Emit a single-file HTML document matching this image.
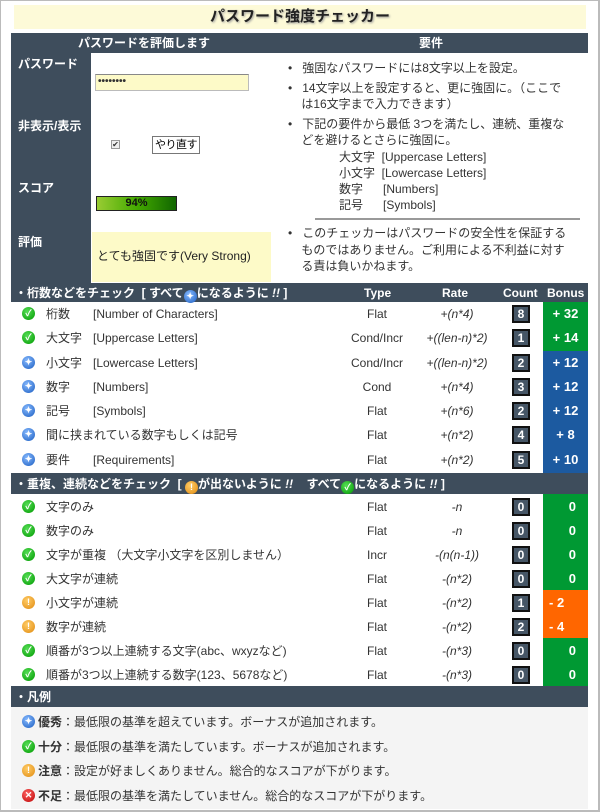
<!DOCTYPE html>
<html><head><meta charset="utf-8"><style>
*{box-sizing:border-box;margin:0;padding:0}
body{width:600px;height:812px;background:#fff;font-family:"Liberation Sans","Noto Sans CJK JP",sans-serif;font-size:12px;color:#333;position:relative;overflow:hidden}
.frame{position:absolute;left:0;top:0;width:600px;height:812px;border:1px solid #bbb;border-right:2px solid #bbb;border-bottom:2px solid #bbb}
.a{position:absolute;white-space:nowrap;line-height:16px}
.dark{background:#3e4d5c;color:#fff;font-weight:bold}
.ic{position:absolute;width:13px;height:13px;border-radius:50%;color:#fff;font-size:9px;line-height:13px;text-align:center;font-weight:bold}
.g{background:radial-gradient(circle at 40% 35%,#5d5,#090)}
.b{background:radial-gradient(circle at 40% 35%,#8bf,#1a5cc0)}
.o{background:radial-gradient(circle at 40% 35%,#fc6,#e08a10)}
.r{background:radial-gradient(circle at 40% 35%,#f66,#b00)}
.cnt{position:absolute;left:512px;width:18px;height:18px;background:#465666;border:2px solid #111;color:#fff;font-size:12px;font-weight:bold;text-align:center;line-height:14px}
.bon{position:absolute;left:543px;width:45px;color:#fff;font-weight:bold;font-size:13px;text-align:center;line-height:16px}
.ty{position:absolute;left:340px;width:74px;text-align:center;line-height:16px}
.rt{position:absolute;left:415px;width:84px;text-align:center;font-style:italic;line-height:16px}
.br{position:absolute;left:93px}
</style></head><body>
<div class="frame"></div>
<div class="a" style="left:14px;top:5px;width:572px;height:24px;background:#fdfad8;text-align:center;font-size:15px;font-weight:bold;line-height:24px;color:#222;text-shadow:1px 1px 2px #999">パスワード強度チェッカー</div>
<div class="a dark" style="left:11px;top:33px;width:577px;height:20px"></div>
<div class="a" style="left:78px;top:35px;color:#fff;font-weight:bold">パスワードを評価します</div>
<div class="a" style="left:419px;top:35px;color:#fff;font-weight:bold">要件</div>
<div class="a dark" style="left:11px;top:53px;width:80px;height:230px"></div>
<div class="a" style="left:18px;top:56px;color:#fff;font-weight:bold">パスワード</div>
<div class="a" style="left:18px;top:118px;color:#fff;font-weight:bold">非表示/表示</div>
<div class="a" style="left:18px;top:180px;color:#fff;font-weight:bold">スコア</div>
<div class="a" style="left:18px;top:234px;color:#fff;font-weight:bold">評価</div>
<div class="a" style="left:95px;top:74px;width:154px;height:17px;background:#fdfac8;border:1px solid #bbb;border-top-color:#888;font-size:10px;line-height:14px;padding-left:2px;font-weight:bold">••••••••</div>
<div class="a" style="left:111px;top:140px;width:9px;height:9px;border:1px solid #999;background:#eee;font-size:8px;line-height:7px;text-align:center">✔</div>
<div class="a" style="left:152px;top:136px;width:48px;height:18px;border:1px solid #777;background:#fff;font-size:11px;text-align:center;line-height:16px;color:#000;letter-spacing:-0.5px">やり直す</div>
<div class="a" style="left:96px;top:196px;width:81px;height:15px;background:linear-gradient(90deg,#9c3 0%,#4a0 50%,#160 100%);border:1px solid #222;text-align:center;font-size:11px;font-weight:bold;line-height:13px;color:#111">94%</div>
<div class="a" style="left:92px;top:232px;width:179px;height:50px;background:#fdfac8;padding:16px 0 0 5px;font-size:12px;color:#222">とても強固です(Very Strong)</div>
<div class="a" style="left:288px;top:60px;line-height:16.5px;font-size:12px;color:#333;white-space:normal;width:295px">
<div>•&nbsp;&nbsp; 強固なパスワードには8文字以上を設定。</div>
<div style="margin-top:3px">•&nbsp;&nbsp; 14文字以上を設定すると、更に強固に。（ここで<br>&nbsp;&nbsp;&nbsp;&nbsp;は16文字まで入力できます）</div>
<div style="margin-top:3px">•&nbsp;&nbsp; 下記の要件から最低 3つを満たし、連続、重複な<br>&nbsp;&nbsp;&nbsp;&nbsp;どを避けるとさらに強固に。</div>
<div style="padding-left:51px;line-height:16px">大文字&nbsp; [Uppercase Letters]<br>小文字&nbsp; [Lowercase Letters]<br>数字&nbsp;&nbsp;&nbsp;&nbsp;&nbsp; [Numbers]<br>記号&nbsp;&nbsp;&nbsp;&nbsp;&nbsp; [Symbols]</div>
</div>
<div class="a" style="left:315px;top:218px;width:265px;height:2px;background:#999"></div>
<div class="a" style="left:288px;top:225px;line-height:16.5px;white-space:normal;width:300px">•&nbsp;&nbsp; このチェッカーはパスワードの安全性を保証する<br>&nbsp;&nbsp;&nbsp;&nbsp;ものではありません。ご利用による不利益に対す<br>&nbsp;&nbsp;&nbsp;&nbsp;る責は負いかねます。</div>

<!-- section 1 -->
<div class="a dark" style="left:11px;top:283px;width:577px;height:19px"></div>
<div class="a" style="left:15px;top:285px;color:#fff;font-weight:bold">・桁数などをチェック &nbsp;[ すべて<span class="ic b" style="position:relative;display:inline-block;top:2px">✦</span>になるように <i>!!</i> ]</div>
<div class="a" style="left:364px;top:285px;color:#fff;font-weight:bold">Type</div>
<div class="a" style="left:442px;top:285px;color:#fff;font-weight:bold">Rate</div>
<div class="a" style="left:503px;top:285px;color:#fff;font-weight:bold">Count</div>
<div class="a" style="left:547px;top:285px;color:#fff;font-weight:bold">Bonus</div>
<div class="a" style="left:543px;top:302px;width:45px;height:49px;background:#093"></div>
<div class="a" style="left:543px;top:351px;width:45px;height:122px;background:#1c5aa0"></div>

<div class="ic g" style="left:22px;top:307px">✓</div><div class="a" style="left:46px;top:306px">桁数</div><div class="a br" style="top:306px">[Number of Characters]</div><div class="ty" style="top:306px">Flat</div><div class="rt" style="top:306px">+(n*4)</div><div class="cnt" style="top:305px">8</div><div class="bon" style="top:306px">+ 32</div>
<div class="ic g" style="left:22px;top:331px">✓</div><div class="a" style="left:46px;top:330px">大文字</div><div class="a br" style="top:330px">[Uppercase Letters]</div><div class="ty" style="top:330px">Cond/Incr</div><div class="rt" style="top:330px">+((len-n)*2)</div><div class="cnt" style="top:329px">1</div><div class="bon" style="top:330px">+ 14</div>
<div class="ic b" style="left:22px;top:356px">✦</div><div class="a" style="left:46px;top:355px">小文字</div><div class="a br" style="top:355px">[Lowercase Letters]</div><div class="ty" style="top:355px">Cond/Incr</div><div class="rt" style="top:355px">+((len-n)*2)</div><div class="cnt" style="top:354px">2</div><div class="bon" style="top:355px">+ 12</div>
<div class="ic b" style="left:22px;top:380px">✦</div><div class="a" style="left:46px;top:379px">数字</div><div class="a br" style="top:379px">[Numbers]</div><div class="ty" style="top:379px">Cond</div><div class="rt" style="top:379px">+(n*4)</div><div class="cnt" style="top:378px">3</div><div class="bon" style="top:379px">+ 12</div>
<div class="ic b" style="left:22px;top:404px">✦</div><div class="a" style="left:46px;top:403px">記号</div><div class="a br" style="top:403px">[Symbols]</div><div class="ty" style="top:403px">Flat</div><div class="rt" style="top:403px">+(n*6)</div><div class="cnt" style="top:402px">2</div><div class="bon" style="top:403px">+ 12</div>
<div class="ic b" style="left:22px;top:428px">✦</div><div class="a" style="left:46px;top:427px">間に挟まれている数字もしくは記号</div><div class="ty" style="top:427px">Flat</div><div class="rt" style="top:427px">+(n*2)</div><div class="cnt" style="top:426px">4</div><div class="bon" style="top:427px">+ 8</div>
<div class="ic b" style="left:22px;top:453px">✦</div><div class="a" style="left:46px;top:452px">要件</div><div class="a br" style="top:452px">[Requirements]</div><div class="ty" style="top:452px">Flat</div><div class="rt" style="top:452px">+(n*2)</div><div class="cnt" style="top:451px">5</div><div class="bon" style="top:452px">+ 10</div>

<!-- section 2 -->
<div class="a dark" style="left:11px;top:473px;width:577px;height:21px"></div>
<div class="a" style="left:15px;top:476px;color:#fff;font-weight:bold">・重複、連続などをチェック &nbsp;[ <span class="ic o" style="position:relative;display:inline-block;top:2px">!</span>が出ないように <i>!!</i> &nbsp;&nbsp;&nbsp;すべて<span class="ic g" style="position:relative;display:inline-block;top:2px">✓</span>になるように <i>!!</i> ]</div>
<div class="a" style="left:543px;top:494px;width:45px;height:96px;background:#093"></div>
<div class="a" style="left:543px;top:590px;width:45px;height:48px;background:#f60"></div>
<div class="a" style="left:543px;top:638px;width:45px;height:48px;background:#093"></div>

<div class="ic g" style="left:22px;top:500px">✓</div><div class="a" style="left:46px;top:499px">文字のみ</div><div class="ty" style="top:499px">Flat</div><div class="rt" style="top:499px">-n</div><div class="cnt" style="top:498px">0</div><div class="bon" style="top:499px;text-align:right;padding-right:12px">0</div>
<div class="ic g" style="left:22px;top:524px">✓</div><div class="a" style="left:46px;top:523px">数字のみ</div><div class="ty" style="top:523px">Flat</div><div class="rt" style="top:523px">-n</div><div class="cnt" style="top:522px">0</div><div class="bon" style="top:523px;text-align:right;padding-right:12px">0</div>
<div class="ic g" style="left:22px;top:548px">✓</div><div class="a" style="left:46px;top:547px">文字が重複 （大文字小文字を区別しません）</div><div class="ty" style="top:547px">Incr</div><div class="rt" style="top:547px">-(n(n-1))</div><div class="cnt" style="top:546px">0</div><div class="bon" style="top:547px;text-align:right;padding-right:12px">0</div>
<div class="ic g" style="left:22px;top:572px">✓</div><div class="a" style="left:46px;top:571px">大文字が連続</div><div class="ty" style="top:571px">Flat</div><div class="rt" style="top:571px">-(n*2)</div><div class="cnt" style="top:570px">0</div><div class="bon" style="top:571px;text-align:right;padding-right:12px">0</div>
<div class="ic o" style="left:22px;top:596px">!</div><div class="a" style="left:46px;top:595px">小文字が連続</div><div class="ty" style="top:595px">Flat</div><div class="rt" style="top:595px">-(n*2)</div><div class="cnt" style="top:594px">1</div><div class="bon" style="top:595px;text-align:left;padding-left:6px">- 2</div>
<div class="ic o" style="left:22px;top:620px">!</div><div class="a" style="left:46px;top:619px">数字が連続</div><div class="ty" style="top:619px">Flat</div><div class="rt" style="top:619px">-(n*2)</div><div class="cnt" style="top:618px">2</div><div class="bon" style="top:619px;text-align:left;padding-left:6px">- 4</div>
<div class="ic g" style="left:22px;top:644px">✓</div><div class="a" style="left:46px;top:643px">順番が3つ以上連続する文字(abc、wxyzなど)</div><div class="ty" style="top:643px">Flat</div><div class="rt" style="top:643px">-(n*3)</div><div class="cnt" style="top:642px">0</div><div class="bon" style="top:643px;text-align:right;padding-right:12px">0</div>
<div class="ic g" style="left:22px;top:668px">✓</div><div class="a" style="left:46px;top:667px">順番が3つ以上連続する数字(123、5678など)</div><div class="ty" style="top:667px">Flat</div><div class="rt" style="top:667px">-(n*3)</div><div class="cnt" style="top:666px">0</div><div class="bon" style="top:667px;text-align:right;padding-right:12px">0</div>

<!-- legend -->
<div class="a dark" style="left:11px;top:686px;width:577px;height:21px"></div>
<div class="a" style="left:15px;top:689px;color:#fff;font-weight:bold">・凡例</div>
<div class="a" style="left:11px;top:707px;width:577px;height:102px;background:#f4f4f4"></div>
<div class="ic b" style="left:22px;top:715px">✦</div><div class="a" style="left:38px;top:714px"><b>優秀</b>：最低限の基準を超えています。ボーナスが追加されます。</div>
<div class="ic g" style="left:22px;top:740px">✓</div><div class="a" style="left:38px;top:739px"><b>十分</b>：最低限の基準を満たしています。ボーナスが追加されます。</div>
<div class="ic o" style="left:22px;top:764px">!</div><div class="a" style="left:38px;top:763px"><b>注意</b>：設定が好ましくありません。総合的なスコアが下がります。</div>
<div class="ic r" style="left:22px;top:789px">✕</div><div class="a" style="left:38px;top:788px"><b>不足</b>：最低限の基準を満たしていません。総合的なスコアが下がります。</div>
</body></html>
